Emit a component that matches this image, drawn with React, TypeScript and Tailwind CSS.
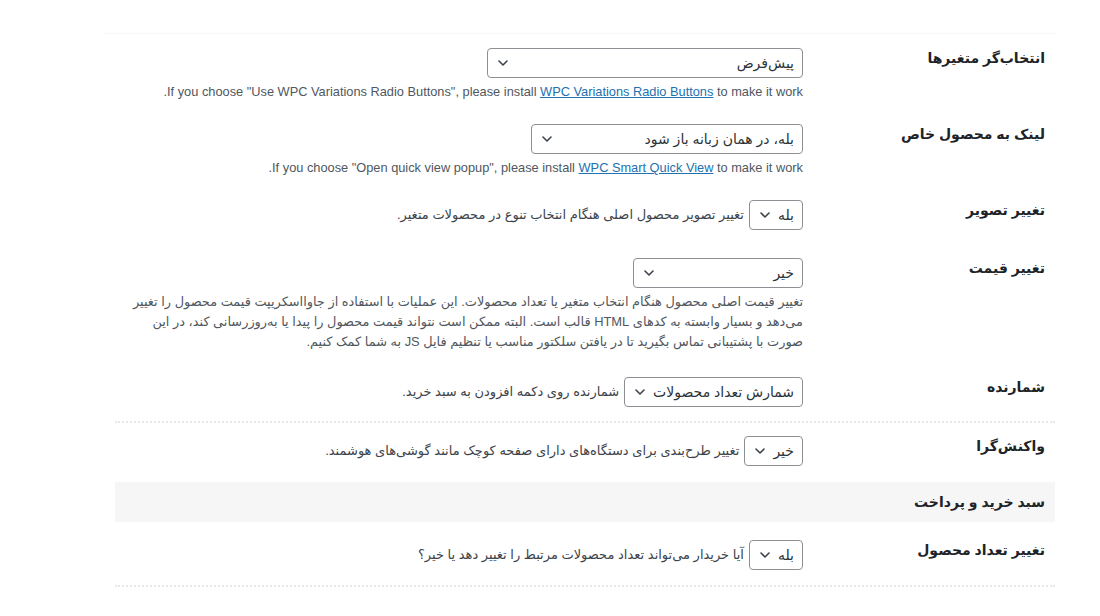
import type { ReactNode } from 'react';

const FONT = '"Liberation Sans", "DejaVu Sans", sans-serif';

function Chevron() {
  return (
    <svg width="10" height="6" viewBox="0 0 10 6" fill="none" stroke="#3c434a" strokeWidth="1.6" strokeLinecap="round" strokeLinejoin="round">
      <path d="M1 1l4 4 4-4" />
    </svg>
  );
}

function Select({ value, className = '' }: { value: string; className?: string }) {
  return (
    <div
      className={`flex h-[30px] shrink-0 items-center justify-between gap-2 rounded-[4px] border border-[#8c8f94] bg-white pr-[8px] pl-[10px] text-[14px] text-[#2c3338] ${className}`}
    >
      <span className="whitespace-nowrap">{value}</span>
      <Chevron />
    </div>
  );
}

function Row({ label, className, children }: { label: string; className: string; children: ReactNode }) {
  return (
    <div className={`grid grid-cols-[252px_1fr] items-start ${className}`}>
      <div className="pr-[10px] text-[14px] font-bold leading-[20px] text-[#1d2327]">{label}</div>
      <div>{children}</div>
    </div>
  );
}

function Inline({ value, text }: { value: string; text: string }) {
  return (
    <div className="flex items-center gap-[5px]">
      <Select value={value} />
      <span className="text-[13px] leading-[18px] text-[#3c434a]">{text}</span>
    </div>
  );
}

function Note({ children }: { children: ReactNode }) {
  return <p className="mt-[5px] text-[12.8px] leading-[18px] text-[#50575e]">{children}</p>;
}

export default function App() {
  return (
    <div dir="rtl" className="min-h-[616px] bg-white pt-[33px] pr-[45px] pl-[105px]" style={{ fontFamily: FONT }}>
      <div className="border-t border-[#f7f7f7] pl-[10px]">
        <Row label="انتخاب‌گر متغیرها" className="pt-[14px] pb-[10px]">
          <div className="flex flex-col items-start">
            <Select value="پیش‌فرض" className="w-[316px]" />
            <Note>
              If you choose "Use WPC Variations Radio Buttons", please install{' '}
              <a className="text-[#2271b1] underline">WPC Variations Radio Buttons</a> to make it work.
            </Note>
          </div>
        </Row>

        <Row label="لینک به محصول خاص" className="pt-[13px] pb-[10px]">
          <div className="flex flex-col items-start">
            <Select value="بله، در همان زبانه باز شود" className="w-[272px]" />
            <Note>
              If you choose "Open quick view popup", please install{' '}
              <a className="text-[#2271b1] underline">WPC Smart Quick View</a> to make it work.
            </Note>
          </div>
        </Row>

        <Row label="تغییر تصویر" className="pt-[13px] pb-[15px]">
          <Inline value="بله" text="تغییر تصویر محصول اصلی هنگام انتخاب تنوع در محصولات متغیر." />
        </Row>

        <Row label="تغییر قیمت" className="pt-[13px] pb-[12px]">
          <div className="flex flex-col items-start">
            <Select value="خیر" className="w-[170px]" />
            <p className="mt-[4px] text-[12.9px] leading-[20px] whitespace-nowrap text-[#50575e]">
              تغییر قیمت اصلی محصول هنگام انتخاب متغیر یا تعداد محصولات. این عملیات با استفاده از جاوااسکریپت قیمت محصول را تغییر
              <br />
              می‌دهد و بسیار وابسته به کدهای HTML قالب است. البته ممکن است نتواند قیمت محصول را پیدا یا به‌روزرسانی کند، در این
              <br />
              صورت با پشتیبانی تماس بگیرید تا در یافتن سلکتور مناسب یا تنظیم فایل JS به شما کمک کنیم.
            </p>
          </div>
        </Row>

        <Row label="شمارنده" className="border-b-2 border-dotted border-[#e6e6e6] pt-[13px] pb-[14px]">
          <Inline value="شمارش تعداد محصولات" text="شمارنده روی دکمه افزودن به سبد خرید." />
        </Row>

        <Row label="واکنش‌گرا" className="pt-[13px] pb-[16px]">
          <Inline value="خیر" text="تغییر طرح‌بندی برای دستگاه‌های دارای صفحه کوچک مانند گوشی‌های هوشمند." />
        </Row>

        <div className="flex h-[40px] items-center bg-[#f6f6f6] pr-[10px] text-[14px] font-bold text-[#1d2327]">
          سبد خرید و پرداخت
        </div>

        <Row label="تغییر تعداد محصول" className="border-b-2 border-dotted border-[#e6e6e6] pt-[18px] pb-[15px]">
          <Inline value="بله" text="آیا خریدار می‌تواند تعداد محصولات مرتبط را تغییر دهد یا خیر؟" />
        </Row>
      </div>
    </div>
  );
}
